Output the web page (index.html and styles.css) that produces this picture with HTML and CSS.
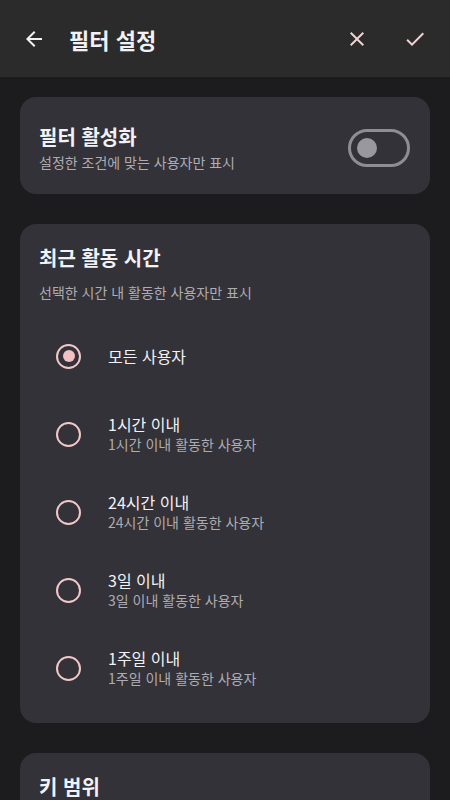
FILE: index.html
```html
<!DOCTYPE html>
<html lang="ko">
<head>
  <meta charset="UTF-8">
  <title>필터 설정</title>
  <link rel="stylesheet" href="styles.css">
</head>
<body>

  <header class="topbar">
    <svg class="icon back" viewBox="0 0 24 24"><path d="M20 11H7.83l5.59-5.59L12 4l-8 8 8 8 1.41-1.41L7.83 13H20v-2z"/></svg>
    <h1>필터 설정</h1>
    <div class="actions">
      <svg class="icon pink" viewBox="0 0 24 24"><path d="M19 6.41L17.59 5 12 10.59 6.41 5 5 6.41 10.59 12 5 17.59 6.41 19 12 13.41 17.59 19 19 17.59 13.41 12z"/></svg>
      <svg class="icon pink" viewBox="0 0 24 24"><path d="M9 16.17L4.83 12l-1.42 1.41L9 19 21 7l-1.41-1.41z"/></svg>
    </div>
  </header>

  <main class="content">

    <section class="card switch-card">
      <div class="switch-text">
        <h2>필터 활성화</h2>
        <p class="sub">설정한 조건에 맞는 사용자만 표시</p>
      </div>
      <div class="toggle"><span class="thumb"></span></div>
    </section>

    <section class="card">
      <h2>최근 활동 시간</h2>
      <p class="desc">선택한 시간 내 활동한 사용자만 표시</p>
      <div class="radio-list">
        <div class="radio-row">
          <span class="radio checked"></span>
          <div class="radio-text"><div class="label">모든 사용자</div></div>
        </div>
        <div class="radio-row">
          <span class="radio"></span>
          <div class="radio-text">
            <div class="label">1시간 이내</div>
            <div class="hint">1시간 이내 활동한 사용자</div>
          </div>
        </div>
        <div class="radio-row">
          <span class="radio"></span>
          <div class="radio-text">
            <div class="label">24시간 이내</div>
            <div class="hint">24시간 이내 활동한 사용자</div>
          </div>
        </div>
        <div class="radio-row">
          <span class="radio"></span>
          <div class="radio-text">
            <div class="label">3일 이내</div>
            <div class="hint">3일 이내 활동한 사용자</div>
          </div>
        </div>
        <div class="radio-row">
          <span class="radio"></span>
          <div class="radio-text">
            <div class="label">1주일 이내</div>
            <div class="hint">1주일 이내 활동한 사용자</div>
          </div>
        </div>
      </div>
    </section>

    <section class="card">
      <h2>키 범위</h2>
      <p class="desc">설정한 키 범위의 사용자만 표시</p>
    </section>

  </main>

</body>
</html>
```

FILE: styles.css
```css
body {
  margin: 0;
  background: #1c1b1d;
  color: #f2f1f4;
  font-family: "Noto Sans CJK KR", "Noto Sans", sans-serif;
}
.topbar {
  height: 77px;
  background: #2b2b2c;
  display: flex;
  align-items: center;
  padding: 0 22px;
  box-sizing: border-box;
}
.topbar h1 {
  margin: 0 0 0 23px;
  font-size: 22px;
  font-weight: 700;
  flex: 1;
}
.icon {
  width: 24px;
  height: 24px;
  fill: #f4f2f5;
}
.icon.pink {
  fill: #f0d2d2;
}
.actions {
  display: flex;
  gap: 34px;
  margin-right: 1px;
}
.content {
  padding: 20px;
  display: flex;
  flex-direction: column;
  gap: 30px;
}
.card {
  background: #333238;
  border-radius: 16px;
  padding: 20px 19px 16px;
}
.card h2 {
  margin: 0;
  font-size: 20px;
  line-height: 28px;
  font-weight: 700;
}
.switch-card {
  display: flex;
  align-items: center;
  padding: 26px 20px 22px 19px;
}
.switch-text {
  flex: 1;
}
.sub, .desc {
  margin: 1px 0 0;
  font-size: 14px;
  line-height: 20px;
  color: #aeacb2;
}
.desc {
  margin-top: 10px;
}
.toggle {
  width: 62px;
  height: 38px;
  box-sizing: border-box;
  border: 3px solid #8f8d94;
  border-radius: 19px;
  display: flex;
  align-items: center;
  padding-left: 6px;
}
.thumb {
  width: 20px;
  height: 20px;
  border-radius: 50%;
  background: #9a989f;
}
.radio-list {
  margin-top: 15px;
}
.radio-row {
  height: 78px;
  display: flex;
  align-items: center;
  padding-left: 17px;
}
.radio {
  width: 25px;
  height: 25px;
  box-sizing: border-box;
  border: 2.5px solid #f2c7c8;
  border-radius: 50%;
  display: flex;
  align-items: center;
  justify-content: center;
  flex-shrink: 0;
}
.radio.checked::after {
  content: "";
  width: 12px;
  height: 12px;
  border-radius: 50%;
  background: #f2c1c3;
}
.radio-text {
  margin-left: 27px;
}
.label {
  font-size: 16px;
  line-height: 20px;
}
.hint {
  font-size: 14px;
  line-height: 20px;
  color: #aeacb2;
}
```
